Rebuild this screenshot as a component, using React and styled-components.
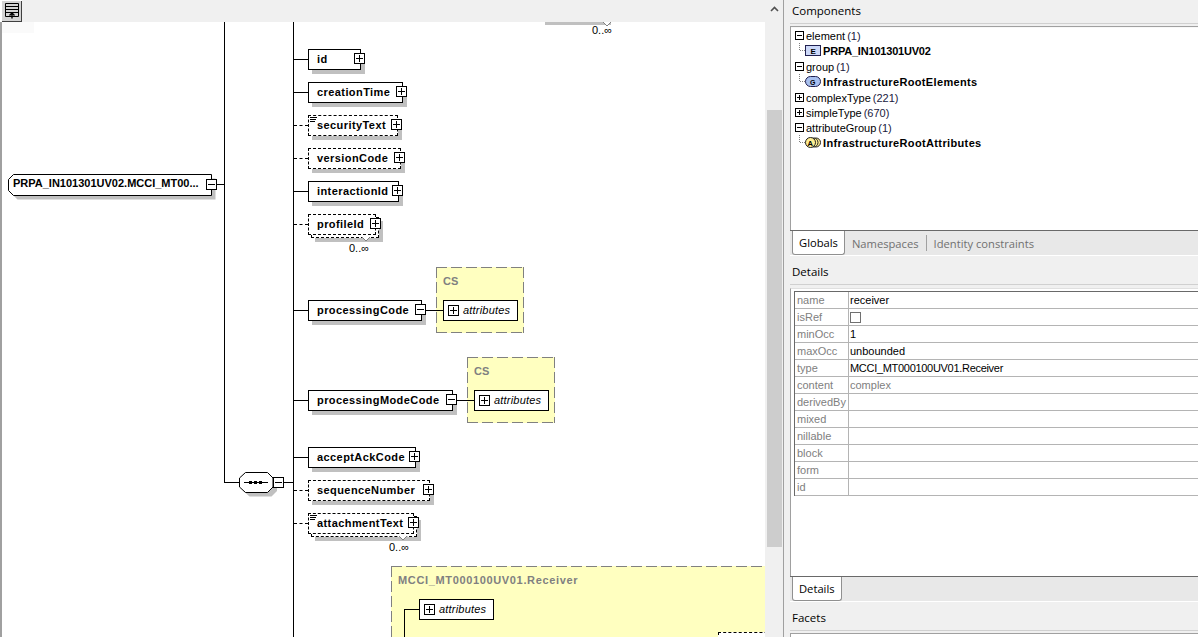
import React from 'react';
import styled, { createGlobalStyle } from 'styled-components';

const GlobalStyle = createGlobalStyle`
	html, body {
		margin: 0;
		height: 100%;
		overflow: hidden;
		background: #fff;
		font-family: 'Liberation Sans', Arial, sans-serif;
		font-size: 11px;
	}
	#root {
		height: 100%;
	}
	* {
		box-sizing: border-box;
	}
`;

const TOOLBAR_H = 22;

const Page = styled.div`
	display: flex;
	width: 100%;
	height: 100%;
`;

const DiagramPane = styled.div`
	display: flex;
	flex-direction: column;
	width: 765px;
	height: 100%;
`;

const Toolbar = styled.div`
	display: flex;
	flex: 0 0 ${TOOLBAR_H}px;
	padding: 1px 0 0 2px;
	background: linear-gradient(90deg, #fff 22px, #f0f0f0 22px);
`;

const ToolButton = styled.button`
	display: flex;
	align-items: center;
	justify-content: center;
	width: 20px;
	height: 21px;
	padding: 0;
	background: #d4d4d4;
	border: none;
	border-right: 1px solid #404040;
	border-bottom: 1px solid #404040;
`;

const Canvas = styled.div`
	position: relative;
	flex: 1;
	overflow: hidden;
	background: #fff;
	box-shadow: inset 2px 0 #a0a0a0;
`;

const Patch = styled.div`
	position: absolute;
	left: 2px;
	top: 0;
	width: 32px;
	height: 11px;
	background: #fafafa;
`;

const HLine = styled.div`
	position: absolute;
	left: ${(p) => p.$x}px;
	top: ${(p) => p.$y - TOOLBAR_H}px;
	width: ${(p) => p.$w}px;
	border-top: 1px ${(p) => (p.$dashed ? 'dashed' : 'solid')} #000;
`;

const VLine = styled.div`
	position: absolute;
	left: ${(p) => p.$x}px;
	top: ${(p) => p.$y - TOOLBAR_H}px;
	height: ${(p) => p.$h}px;
	border-left: 1px solid #000;
`;

const NodeWrap = styled.div`
	position: absolute;
	left: ${(p) => p.$x}px;
	top: ${(p) => p.$y - TOOLBAR_H}px;
	width: ${(p) => p.$w}px;
	height: 21px;
`;

const NodeBack = styled.div`
	position: absolute;
	left: 3px;
	top: 3px;
	width: 100%;
	height: 100%;
	background: #fff;
	border: 1px dashed #000;
	box-shadow: 4px 4px 0 #c0c0c0;
`;

const NodeBox = styled.div`
	position: relative;
	display: flex;
	align-items: center;
	width: 100%;
	height: 100%;
	padding: 0 0 1px 8px;
	background: #fff;
	border: 1px ${(p) => (p.$dashed ? 'dashed' : 'solid')} #000;
	box-shadow: ${(p) => (p.$multi ? 'none' : '4px 4px 0 #c0c0c0')};
	font-weight: bold;
	letter-spacing: 0.42px;
	white-space: nowrap;
	color: #000;
`;

const Toggle = styled.span`
	position: relative;
	display: block;
	flex: none;
	width: 11px;
	height: 11px;
	background: #fff;
	border: 1px solid #000;

	&::before {
		content: '';
		position: absolute;
		left: 1px;
		top: 4px;
		width: 7px;
		height: 1px;
		background: #000;
	}

	&::after {
		content: '';
		display: ${(p) => (p.$open ? 'none' : 'block')};
		position: absolute;
		left: 4px;
		top: 1px;
		width: 1px;
		height: 7px;
		background: #000;
	}
`;

const NodeToggle = styled(Toggle)`
	position: absolute;
	right: ${(p) => p.$right}px;
	top: 3px;
`;

const DocMark = styled.svg`
	position: absolute;
	left: 1px;
	top: 1px;
`;

const Occurs = styled.span`
	position: absolute;
	left: ${(p) => p.$x}px;
	top: ${(p) => p.$y - TOOLBAR_H}px;
	line-height: 13px;
	color: #000;
`;

const OccursTick = styled.svg`
	position: absolute;
	left: ${(p) => p.$x}px;
	top: ${(p) => p.$y - TOOLBAR_H}px;
`;

const ClippedShadow = styled.div`
	position: absolute;
	left: 545px;
	top: 0;
	width: 66px;
	height: 3px;
	background: #c0c0c0;
`;

const RootShape = styled.svg`
	position: absolute;
	left: 8px;
	top: ${174 - TOOLBAR_H}px;
`;

const RootLabel = styled.span`
	position: absolute;
	left: 13px;
	top: ${177 - TOOLBAR_H}px;
	font-weight: bold;
	line-height: 13px;
	white-space: nowrap;
`;

const SequenceShape = styled.svg`
	position: absolute;
	left: 239px;
	top: ${472 - TOOLBAR_H}px;
`;

const FreeToggle = styled(Toggle)`
	position: absolute;
	left: ${(p) => p.$x}px;
	top: ${(p) => p.$y - TOOLBAR_H}px;
`;

const TypeBox = styled.div`
	position: absolute;
	left: ${(p) => p.$x}px;
	top: ${(p) => p.$y - TOOLBAR_H}px;
	width: ${(p) => p.$w}px;
	height: ${(p) => p.$h}px;
	padding: 8px 0 0 7px;
	background:
		repeating-linear-gradient(90deg, #808080 0 11px, transparent 11px 15px) top / 100% 1px no-repeat,
		repeating-linear-gradient(90deg, #808080 0 11px, transparent 11px 15px) bottom / 100% 1px no-repeat,
		repeating-linear-gradient(180deg, #808080 0 11px, transparent 11px 15px) left / 1px 100% no-repeat,
		repeating-linear-gradient(180deg, #808080 0 11px, transparent 11px 15px) right / 1px 100% no-repeat,
		#ffffc0;
	color: #808080;
	font-weight: bold;
	letter-spacing: ${(p) => p.$spacing || 0}px;
	line-height: 13px;
	white-space: nowrap;
`;

const AttrBox = styled.div`
	position: absolute;
	left: ${(p) => p.$x}px;
	top: ${(p) => p.$y - TOOLBAR_H}px;
	display: flex;
	align-items: center;
	gap: 4px;
	width: 75px;
	height: 21px;
	padding-left: 4px;
	background: #fff;
	border: 1px solid #000;
	color: #000;
`;

const AttrLabel = styled.span`
	margin-top: -2px;
	font-style: italic;
	letter-spacing: 0.2px;
`;

const ClippedNode = styled.div`
	position: absolute;
	left: 718px;
	top: ${632 - TOOLBAR_H}px;
	width: 60px;
	height: 20px;
	background: #fff;
	border: 1px dashed #000;
`;

const Scrollbar = styled.div`
	display: flex;
	flex-direction: column;
	align-items: center;
	flex: 0 0 18px;
	padding-top: 6px;
	background: #f0f0f0;
`;

const ScrollThumb = styled.div`
	width: 15px;
	height: 437px;
	margin-top: 98px;
	background: #cdcdcd;
`;

const RightPanel = styled.div`
	display: flex;
	flex-direction: column;
	flex: 1;
	min-width: 0;
	height: 100%;
	padding-left: 6px;
	background: #f0f0f0;
	border-left: 1px solid #a0a0a0;
`;

const PanelTitle = styled.div`
	display: flex;
	align-items: center;
	flex: none;
	height: ${(p) => p.$h}px;
	margin-top: ${(p) => p.$top || 0}px;
	padding: 0 0 2px 2px;
	border-bottom: 1px solid #d0d0d0;
	font-family: 'Open Sans', 'Noto Sans', sans-serif;
	font-size: 11.5px;
	color: #000;
`;

const PaneFrame = styled.div`
	flex: none;
	height: ${(p) => p.$h}px;
	margin-top: ${(p) => p.$top}px;
	background: #fff;
	border-left: 1px solid #a0a0a0;
	border-top: 1px solid ${(p) => p.$topColor || '#a0a0a0'};
	overflow: hidden;
`;

const TabStrip = styled.div`
	display: flex;
	align-items: flex-start;
	flex: none;
	height: 26px;
	padding-left: 2px;
	background: #e8e8e8;
	border-top: 1px solid #696969;
	border-bottom: 1px solid #fff;
`;

const Tab = styled.div`
	display: flex;
	align-items: center;
	height: 24px;
	padding: 0 ${(p) => (p.$active ? 6 : 7)}px;
	background: ${(p) => (p.$active ? '#fff' : 'transparent')};
	border: ${(p) => (p.$active ? '1px solid #909090' : 'none')};
	border-top: none;
	border-radius: 0 0 3px 3px;
	font-family: 'Open Sans', 'Noto Sans', sans-serif;
	font-size: 11.2px;
	color: ${(p) => (p.$active ? '#000' : '#707070')};
`;

const TabSep = styled.span`
	width: 1px;
	height: 16px;
	margin-top: 4px;
	background: #a0a0a0;
`;

const Tree = styled.div`
	display: flex;
	flex-direction: column;
	padding-left: 4px;
	border-top: 1px solid #f8f8f8;
`;

const TreeRow = styled.div`
	display: flex;
	align-items: center;
	height: 15px;
	color: #000;
	white-space: nowrap;
`;

const TreeChild = styled(TreeRow)`
	margin-bottom: ${(p) => (p.$last ? 0 : 1)}px;
	font-weight: bold;
	letter-spacing: ${(p) => p.$spacing}px;
	color: #000;
`;

const TreeToggle = styled(Toggle)`
	width: 9px;
	height: 9px;
	margin-right: 2px;

	&::before {
		width: 5px;
		top: 3px;
	}

	&::after {
		left: 3px;
		height: 5px;
	}
`;

const Count = styled.span`
	margin-left: 2px;
	color: #202040;
`;

const Elbow = styled.svg`
	flex: none;
	margin-left: 4px;
`;

const ChildIcon = styled.svg`
	flex: none;
	margin-right: 2px;
`;

const PropGrid = styled.div`
	display: flex;
	flex-direction: column;
	margin: 2px 0 0 3px;
	border-left: 1px solid #696969;
	border-top: 1px solid #696969;
`;

const PropRow = styled.div`
	display: flex;
	flex: none;
	height: 17px;
	border-bottom: 1px solid #b4b4b4;
`;

const PropName = styled.div`
	display: flex;
	align-items: center;
	flex: 0 0 54px;
	padding-left: 2px;
	border-right: 1px solid #b4b4b4;
	color: #808080;
	white-space: nowrap;
`;

const PropValue = styled.div`
	display: flex;
	align-items: center;
	flex: 1;
	padding-left: 1px;
	color: ${(p) => (p.$muted ? '#808080' : '#000')};
	letter-spacing: ${(p) => p.$spacing || 0}px;
	white-space: nowrap;
`;

const Check = styled.span`
	display: block;
	width: 11px;
	height: 11px;
	background: #fff;
	border: 1px solid #707070;
`;

const nodes = [
	{ name: 'id', x: 308, y: 49, w: 53 },
	{ name: 'creationTime', x: 308, y: 82, w: 95 },
	{ name: 'securityText', x: 308, y: 115, w: 90, dashed: true, doc: true },
	{ name: 'versionCode', x: 308, y: 148, w: 93, dashed: true },
	{ name: 'interactionId', x: 308, y: 181, w: 91 },
	{ name: 'profileId', x: 308, y: 214, w: 68, dashed: true, multi: true },
	{ name: 'processingCode', x: 308, y: 300, w: 114, open: true },
	{ name: 'processingModeCode', x: 308, y: 390, w: 145, open: true },
	{ name: 'acceptAckCode', x: 308, y: 447, w: 108 },
	{ name: 'sequenceNumber', x: 308, y: 480, w: 122, dashed: true },
	{ name: 'attachmentText', x: 308, y: 513, w: 106, dashed: true, multi: true, doc: true },
];

const details = [
	{ name: 'name', value: 'receiver' },
	{ name: 'isRef', check: true },
	{ name: 'minOcc', value: '1' },
	{ name: 'maxOcc', value: 'unbounded' },
	{ name: 'type', value: 'MCCI_MT000100UV01.Receiver', spacing: -0.3 },
	{ name: 'content', value: 'complex', muted: true },
	{ name: 'derivedBy' },
	{ name: 'mixed' },
	{ name: 'nillable' },
	{ name: 'block' },
	{ name: 'form' },
	{ name: 'id' },
];

function TableIcon() {
	return (
		<svg width="14" height="16" viewBox="0 0 14 16">
			<path d="M.5.5h13v13H.5zM.5 3.5h13M.5 6.5h13M.5 9.5h13" fill="none" stroke="#000" />
			<path d="M7 15.5V10M4.5 12.5 7 10l2.5 2.5" fill="none" stroke="#000" strokeWidth="1.4" />
		</svg>
	);
}

function Tick({ x, y }) {
	return (
		<OccursTick $x={x} $y={y} width="9" height="5" viewBox="0 0 9 5">
			<path d="M0 0 4 4 8 0" fill="#fff" stroke="#808080" />
		</OccursTick>
	);
}

function Node({ name, x, y, w, dashed, multi, open, doc }) {
	return (
		<NodeWrap $x={x} $y={y} $w={w}>
			{multi && <NodeBack />}
			<NodeBox $dashed={dashed} $multi={multi}>
				{doc && (
					<DocMark width="7" height="5" viewBox="0 0 7 5">
						<path d="M0 .5h7M0 2.5h6M0 4.5h5" stroke="#000" />
					</DocMark>
				)}
				{name}
				<NodeToggle $open={open} $right={multi ? -6 : -5} />
			</NodeBox>
		</NodeWrap>
	);
}

function Attributes({ x, y }) {
	return (
		<AttrBox $x={x} $y={y}>
			<Toggle />
			<AttrLabel>attributes</AttrLabel>
		</AttrBox>
	);
}

function ElbowLine() {
	return (
		<Elbow width="6" height="15" viewBox="0 0 6 15">
			<path d="M.5 0v7.5H6" fill="none" stroke="#808080" strokeDasharray="1 1" />
		</Elbow>
	);
}

function ElementIcon() {
	return (
		<ChildIcon width="16" height="11" viewBox="0 0 16 11">
			<rect x=".5" y=".5" width="15" height="10" fill="#ccd8f8" stroke="#202050" />
			<text x="8" y="8.500" fontSize="8" fontWeight="bold" textAnchor="middle" fill="#000">E</text>
		</ChildIcon>
	);
}

function GroupIcon() {
	return (
		<ChildIcon width="16" height="11" viewBox="0 0 16 11">
			<rect x=".5" y=".5" width="15" height="10" rx="5" fill="#a8c0f0" stroke="#202050" />
			<text x="8" y="8.500" fontSize="7" fontWeight="bold" textAnchor="middle" fill="#000">G</text>
		</ChildIcon>
	);
}

function AttrGroupIcon() {
	return (
		<ChildIcon width="16" height="11" viewBox="0 0 16 11">
			<circle cx="11" cy="5.500" r="4.500" fill="#ffee90" stroke="#202020" />
			<circle cx="8.500" cy="5.500" r="4.500" fill="#ffee90" stroke="#202020" />
			<circle cx="5.500" cy="5.500" r="5" fill="#ffee90" stroke="#202020" />
			<text x="5.500" y="8.500" fontSize="7.500" fontWeight="bold" textAnchor="middle" fill="#000">A</text>
		</ChildIcon>
	);
}

export default function App() {
	return (
		<Page>
			<GlobalStyle />
			<DiagramPane>
				<Toolbar>
					<ToolButton>
						<TableIcon />
					</ToolButton>
				</Toolbar>
				<Canvas>
					<Patch />
					<ClippedShadow />
					<Tick x={603} y={22} />
					<Occurs $x={592} $y={24}>0..∞</Occurs>

					<VLine $x={224} $y={22} $h={461} />
					<VLine $x={293} $y={22} $h={620} />

					<RootShape width="212" height="27" viewBox="0 0 212 27">
						<path d="M9.500 4.500h198v21H9.500L4.500 20.500v-11z" fill="#c0c0c0" />
						<path d="M5.500.5h198v21H5.500L.5 16.500v-11z" fill="#fff" stroke="#000" />
					</RootShape>
					<RootLabel>PRPA_IN101301UV02.MCCI_MT00...</RootLabel>
					<FreeToggle $x={206} $y={179} $open />
					<HLine $x={217} $y={184} $w={7} />

					<HLine $x={224} $y={482} $w={15} />
					<SequenceShape width="40" height="26" viewBox="0 0 40 26">
						<path d="M10.500 4.500h22l5.500 5.500v9l-5.500 5.500h-22L4.500 19v-9z" fill="#c0c0c0" />
						<path d="M6.500.5h22l5.500 5.500v9l-5.500 5.500h-22L.5 15V6z" fill="#fff" stroke="#000" />
						<path d="M5 10.500h24" stroke="#000" />
						<path d="M10 9h3v3h-3zM15 9h3v3h-3zM20 9h3v3h-3z" fill="#000" />
					</SequenceShape>
					<FreeToggle $x={273} $y={477} $open />
					<HLine $x={284} $y={482} $w={9} />

					{nodes.map((n) => (
						<HLine key={n.name} $x={294} $y={n.y + 10} $w={14} $dashed={n.dashed} />
					))}
					{nodes.map((n) => (
						<Node key={n.name} {...n} />
					))}

					<Tick x={362} y={237} />
					<Occurs $x={349} $y={242}>0..∞</Occurs>
					<Tick x={399} y={536} />
					<Occurs $x={389} $y={541}>0..∞</Occurs>

					<TypeBox $x={436} $y={267} $w={88} $h={66}>CS</TypeBox>
					<HLine $x={426} $y={310} $w={17} />
					<Attributes x={443} y={300} />

					<TypeBox $x={467} $y={357} $w={88} $h={66}>CS</TypeBox>
					<HLine $x={457} $y={400} $w={17} />
					<Attributes x={474} y={390} />

					<TypeBox $x={391} $y={566} $w={420} $h={120} $spacing={0.65}>MCCI_MT000100UV01.Receiver</TypeBox>
					<HLine $x={404} $y={609} $w={15} />
					<VLine $x={404} $y={609} $h={40} />
					<Attributes x={419} y={599} />
					<ClippedNode />
				</Canvas>
			</DiagramPane>

			<Scrollbar>
				<svg width="9" height="6" viewBox="0 0 9 6">
					<path d="M1 5 4.500 1.500 8 5" fill="none" stroke="#505050" strokeWidth="1.6" />
				</svg>
				<ScrollThumb />
			</Scrollbar>

			<RightPanel>
				<PanelTitle $h={24}>Components</PanelTitle>
				<PaneFrame $top={2} $h={204}>
					<Tree>
						<TreeRow><TreeToggle $open />element<Count>(1)</Count></TreeRow>
						<TreeChild $spacing={-0.2}><ElbowLine /><ElementIcon />PRPA_IN101301UV02</TreeChild>
						<TreeRow><TreeToggle $open />group<Count>(1)</Count></TreeRow>
						<TreeChild $spacing={0.35}><ElbowLine /><GroupIcon />InfrastructureRootElements</TreeChild>
						<TreeRow><TreeToggle />complexType<Count>(221)</Count></TreeRow>
						<TreeRow><TreeToggle />simpleType<Count>(670)</Count></TreeRow>
						<TreeRow><TreeToggle $open />attributeGroup<Count>(1)</Count></TreeRow>
						<TreeChild $last $spacing={0.36}><ElbowLine /><AttrGroupIcon />InfrastructureRootAttributes</TreeChild>
					</Tree>
				</PaneFrame>
				<TabStrip>
					<Tab $active>Globals</Tab>
					<Tab>Namespaces</Tab>
					<TabSep />
					<Tab>Identity constraints</Tab>
				</TabStrip>

				<PanelTitle $top={4} $h={25}>Details</PanelTitle>
				<PaneFrame $top={3} $h={288} $topColor="#e0e0e0">
					<PropGrid>
						{details.map((d) => (
							<PropRow key={d.name}>
								<PropName>{d.name}</PropName>
								<PropValue $muted={d.muted} $spacing={d.spacing}>
									{d.check ? <Check /> : d.value}
								</PropValue>
							</PropRow>
						))}
					</PropGrid>
				</PaneFrame>
				<TabStrip>
					<Tab $active>Details</Tab>
				</TabStrip>

				<PanelTitle $top={4} $h={25}>Facets</PanelTitle>
				<PaneFrame $top={2} $h={20} />
			</RightPanel>
		</Page>
	);
}
